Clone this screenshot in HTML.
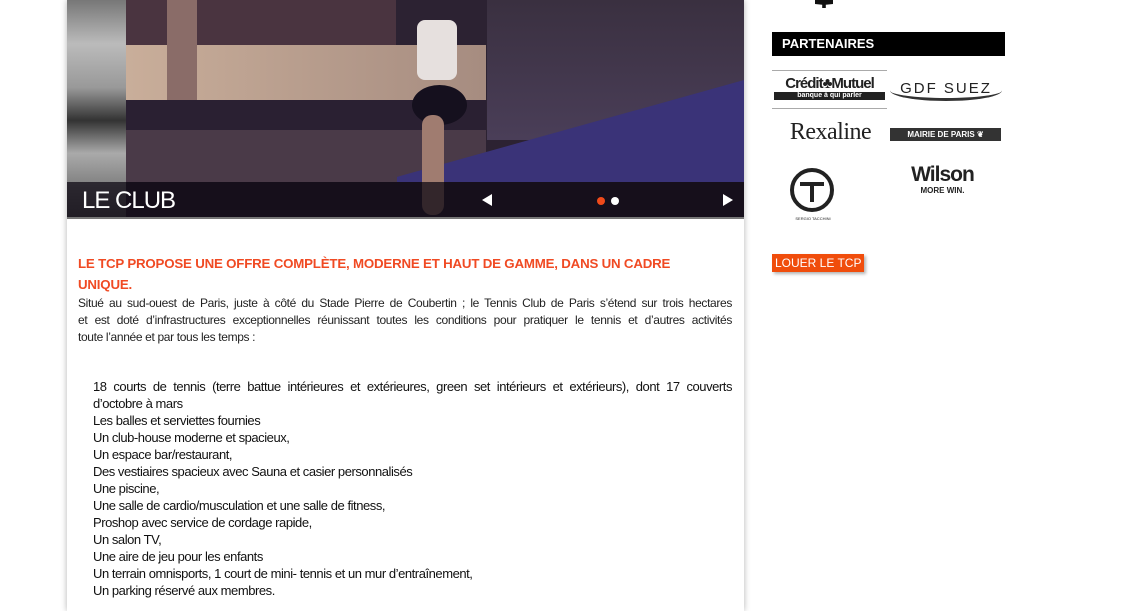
<!DOCTYPE html>
<html><head><meta charset="utf-8"><style>
*{margin:0;padding:0;box-sizing:border-box}
body{width:1132px;height:611px;overflow:hidden;background:#fff;font-family:"Liberation Sans",sans-serif;position:relative}
#main{position:absolute;left:67px;top:0;width:677px;height:611px;background:#fff;box-shadow:0 0 6px rgba(0,0,0,.3)}
#hero{position:absolute;left:0;top:0;width:677px;height:219px;overflow:hidden;border-bottom:2px solid #777;background:#2c2232}
.r{position:absolute}
#strip{position:absolute;left:0;top:0;width:59px;height:219px;background:linear-gradient(180deg,#777 0,#bbb 20%,#999 40%,#333 55%,#aaa 70%,#555 100%)}
#cap{position:absolute;left:0;top:182px;width:677px;height:35px;background:rgba(15,10,20,.75)}
#cap h1{position:absolute;left:15px;top:5px;color:#fff;font-size:24px;font-weight:normal;letter-spacing:-1px}
.dot{position:absolute;top:15px;width:8px;height:8px;border-radius:50%}
.content{position:absolute;left:11px;top:253px;width:654px}
h2{color:#f04a23;font-size:13.3px;font-weight:bold;line-height:21px;letter-spacing:-.2px}
.p{font-size:12px;line-height:17px;color:#222;letter-spacing:-.35px}
.j{text-align:justify;text-align-last:justify;white-space:nowrap}
.list{position:absolute;left:26px;top:378px;width:639px;font-size:13px;line-height:17px;color:#111;letter-spacing:-.45px}
#side{position:absolute;left:772px;top:32px;width:233px}
.bar{height:24px;background:#000;color:#fff;font-weight:bold;font-size:13px;padding:4px 10px}
.logo{position:absolute;text-align:center;color:#222}
.btn{position:absolute;left:772px;top:254px;background:#f04d0c;color:#fff;font-size:12px;padding:2px 3px;box-shadow:2px 2px 3px rgba(0,0,0,.3)}
</style></head><body>
<div style="position:absolute;left:815px;top:0;width:18px;height:8px;background:#111;clip-path:polygon(0 0,100% 0,100% 50%,60% 60%,60% 100%,40% 100%,40% 60%,0 50%)"></div>
<div id="main">
<div id="hero">
<div class="r" style="left:59px;top:0;width:270px;height:45px;background:#4a3440"></div>
<div class="r" style="left:59px;top:45px;width:360px;height:60px;background:linear-gradient(90deg,#c9ae9a,#a68c80)"></div>
<div class="r" style="left:100px;top:0;width:30px;height:110px;background:#8a6c68"></div>
<div class="r" style="left:59px;top:100px;width:360px;height:30px;background:#2a2032"></div>
<div class="r" style="left:59px;top:130px;width:360px;height:52px;background:#4a3a48"></div>
<div class="r" style="left:420px;top:0;width:257px;height:140px;background:linear-gradient(180deg,#3a3040,#4a3e58)"></div>
<div class="r" style="left:330px;top:80px;width:347px;height:102px;background:#3a3378;clip-path:polygon(100% 0,100% 100%,0 100%,0 95%)"></div>
<div class="r" style="left:350px;top:20px;width:40px;height:60px;background:#e6e0de;border-radius:8px"></div>
<div class="r" style="left:345px;top:85px;width:55px;height:40px;background:#15101e;border-radius:50%"></div>
<div class="r" style="left:355px;top:115px;width:22px;height:100px;background:#a07c70;border-radius:10px"></div>
<div id="strip"></div>
<div id="cap"><h1>LE CLUB</h1>
<svg style="position:absolute;left:414px;top:12px" width="12" height="12"><path d="M11 0V12L1 6Z" fill="#fff"/></svg>
<div class="dot" style="left:530px;background:#f04a1a"></div><div class="dot" style="left:544px;background:#fff"></div>
<svg style="position:absolute;left:655px;top:12px" width="12" height="12"><path d="M1 0V12L11 6Z" fill="#fff"/></svg>
</div></div>
<div class="content">
<h2>LE TCP PROPOSE UNE OFFRE COMPLÈTE, MODERNE ET HAUT DE GAMME, DANS UN CADRE<br>UNIQUE.</h2>
<div class="p j">Situé au sud-ouest de Paris, juste à côté du Stade Pierre de Coubertin ; le Tennis Club de Paris s’étend sur trois hectares</div>
<div class="p j">et est doté d’infrastructures exceptionnelles réunissant toutes les conditions pour pratiquer le tennis et d’autres activités</div>
<div class="p">toute l’année et par tous les temps :</div>
</div>
<div class="list">
<div class="j">18 courts de tennis (terre battue intérieures et extérieures, green set intérieurs et extérieurs), dont 17 couverts</div>
<div>d’octobre à mars</div>
<div>Les balles et serviettes fournies</div>
<div>Un club-house moderne et spacieux,</div>
<div>Un espace bar/restaurant,</div>
<div>Des vestiaires spacieux avec Sauna et casier personnalisés</div>
<div>Une piscine,</div>
<div>Une salle de cardio/musculation et une salle de fitness,</div>
<div>Proshop avec service de cordage rapide,</div>
<div>Un salon TV,</div>
<div>Une aire de jeu pour les enfants</div>
<div>Un terrain omnisports, 1 court de mini- tennis et un mur d’entraînement,</div>
<div>Un parking réservé aux membres.</div>
</div>
</div>
<div id="side"><div class="bar">PARTENAIRES</div></div>
<div class="logo" style="left:772px;top:70px;width:115px;height:39px;border-top:1px solid #aaa;border-bottom:1px solid #aaa">
<div style="font-weight:bold;font-size:15px;letter-spacing:-1px;line-height:17px;margin-top:4px">Crédit♣Mutuel</div>
<div style="background:#222;color:#fff;font-size:7px;font-weight:bold;margin:0 2px;line-height:8px">banque à qui parler</div></div>
<div class="logo" style="left:890px;top:80px;width:112px;font-size:15px;letter-spacing:2px;border-bottom:3px solid #333;border-radius:0 0 50% 50%;line-height:18px">GDF SUEZ</div>
<div class="logo" style="left:778px;top:118px;width:105px;font-family:'Liberation Serif',serif;font-size:24px;line-height:28px;letter-spacing:-.5px">Rexaline</div>
<div class="logo" style="left:890px;top:128px;width:111px;height:13px;background:#333;color:#fff;font-size:8px;line-height:13px;font-weight:bold">MAIRIE DE PARIS ❦</div>
<div class="logo" style="left:790px;top:168px;width:44px;height:44px;border:4px solid #222;border-radius:50%"><div style="position:absolute;left:6px;top:10px;width:24px;height:4px;background:#222"></div><div style="position:absolute;left:16px;top:10px;width:4px;height:20px;background:#222"></div></div>
<div class="logo" style="left:793px;top:216px;width:40px;font-size:4px">SERGIO TACCHINI</div>
<div class="logo" style="left:900px;top:163px;width:85px;font-weight:bold;font-size:21px;line-height:24px;letter-spacing:-1px">Wilson<div style="font-size:8px;line-height:8px;letter-spacing:0">MORE WIN.</div></div>
<div class="btn">LOUER LE TCP</div>
</body></html>
